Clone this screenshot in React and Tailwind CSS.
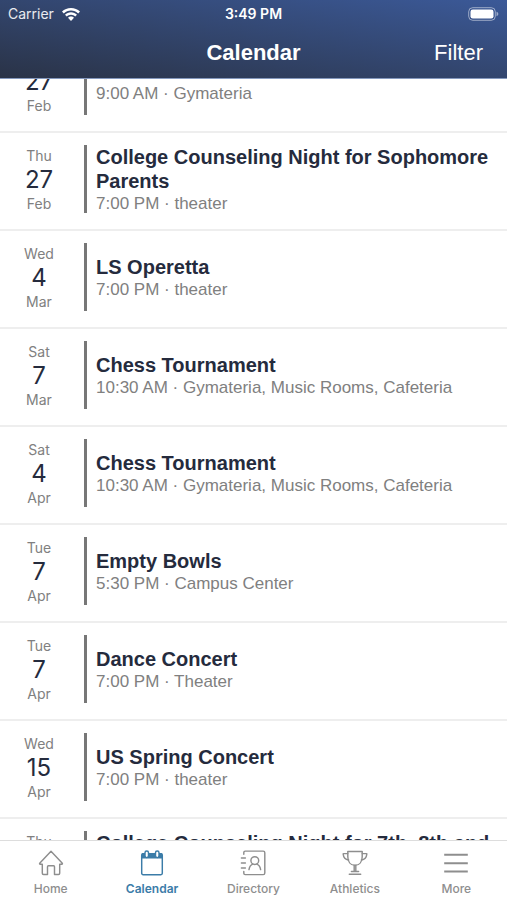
import { useLayoutEffect, useRef } from 'react';

const EVENTS = [
  { id: 1, weekday: 'Wed', day: '27', month: 'Feb', title: 'Book Fair', detail: '9:00 AM · Gymateria' },
  { id: 2, weekday: 'Thu', day: '27', month: 'Feb', title: 'College Counseling Night for Sophomore Parents', detail: '7:00 PM · theater' },
  { id: 3, weekday: 'Wed', day: '4', month: 'Mar', title: 'LS Operetta', detail: '7:00 PM · theater' },
  { id: 4, weekday: 'Sat', day: '7', month: 'Mar', title: 'Chess Tournament', detail: '10:30 AM · Gymateria, Music Rooms, Cafeteria' },
  { id: 5, weekday: 'Sat', day: '4', month: 'Apr', title: 'Chess Tournament', detail: '10:30 AM · Gymateria, Music Rooms, Cafeteria' },
  { id: 6, weekday: 'Tue', day: '7', month: 'Apr', title: 'Empty Bowls', detail: '5:30 PM · Campus Center' },
  { id: 7, weekday: 'Tue', day: '7', month: 'Apr', title: 'Dance Concert', detail: '7:00 PM · Theater' },
  { id: 8, weekday: 'Wed', day: '15', month: 'Apr', title: 'US Spring Concert', detail: '7:00 PM · theater' },
  { id: 9, weekday: 'Thu', day: '16', month: 'Apr', title: 'College Counseling Night for 7th, 8th and 9th Grade', detail: '7:00 PM · theater' },
];

function TabIcon({ children }) {
  return (
    <svg viewBox="0 0 26 26" className="size-[26px]" fill="none" stroke="currentColor" strokeWidth="1.45" strokeLinejoin="round" strokeLinecap="round" aria-hidden="true">
      {children}
    </svg>
  );
}

function HomeIcon() {
  return (
    <TabIcon>
      <path d="M13 1.300 1.700 13.300q-.5.9.6 1h2v9q0 1.200 1.200 1.200h4v-7.800q0-.9.9-.9h5.200q.9 0 .9.9v7.800h4q1.200 0 1.200-1.200v-9h2q1.100-.1.6-1Z" />
    </TabIcon>
  );
}

function CalendarIcon() {
  return (
    <TabIcon>
      <path d="M2.700 4.200q0-1.200 1.200-1.200h18.200q1.200 0 1.200 1.200v4.200H2.700Z" fill="currentColor" stroke="none" />
      <rect x="2.700" y="3.800" width="20.600" height="20.900" rx="1.400" />
      <rect x="6" y="1" width="3.500" height="6.600" rx="1.750" fill="#fff" />
      <rect x="16.500" y="1" width="3.500" height="6.600" rx="1.750" fill="#fff" />
    </TabIcon>
  );
}

function DirectoryIcon() {
  return (
    <TabIcon>
      <path d="M3.800 4.200V2.500q0-1.400 1.400-1.400h18q1.600 0 1.600 1.600v20.300q0 1.600-1.600 1.600h-18q-1.400 0-1.400-1.400v-1.700" />
      <path d="M1.400 7.900h4M1.400 12.900h4M1.400 17.900h4" />
      <circle cx="14.800" cy="10.600" r="3.900" />
      <path d="M9 19.600c.4-3.100 1.900-4.800 3.700-5.500M20.600 19.600c-.4-3.100-1.900-4.800-3.700-5.500" />
    </TabIcon>
  );
}

function TrophyIcon() {
  return (
    <TabIcon>
      <path d="M5.800 1.400h14.400v5.300c0 5-2.700 8.600-7.200 8.600s-7.200-3.600-7.200-8.600Z" />
      <path d="M5.800 3.600H1.600q-.5 0-.4.6c.3 3.200 2.200 5.300 5.400 5.800M20.200 3.600h4.200q.5 0 .4.600c-.3 3.200-2.200 5.300-5.400 5.800" />
      <path d="M12.200 15.400v5.900M13.800 15.400v5.900M9.400 21.500h7.200M7.300 24.300h11.400" />
    </TabIcon>
  );
}

function MoreIcon() {
  return (
    <TabIcon>
      <path d="M1.200 4.800h23.600M1.200 13.200h23.600M1.200 21.500h23.600" strokeWidth="2" strokeLinecap="butt" />
    </TabIcon>
  );
}

const TABS = [
  { label: 'Home', Icon: HomeIcon },
  { label: 'Calendar', Icon: CalendarIcon, active: true },
  { label: 'Directory', Icon: DirectoryIcon },
  { label: 'Athletics', Icon: TrophyIcon },
  { label: 'More', Icon: MoreIcon },
];

function StatusBar() {
  return (
    <div className="grid h-7 grid-cols-3 items-center px-2 font-[Inter,sans-serif] text-sm">
      <div className="flex items-center gap-2 text-white/90">
        <span>Carrier</span>
        <svg viewBox="0 0 18 13" className="h-[13px] w-[18px]" fill="#fff" aria-hidden="true">
          <path d="M9 0C5.500 0 2.300 1.300 0 3.600L1.800 5.500C3.700 3.600 6.200 2.600 9 2.600s5.300 1 7.200 2.900L18 3.600C15.700 1.300 12.500 0 9 0Z" />
          <path d="M9 4.200c-2.400 0-4.500.9-6 2.500l1.800 1.900C5.900 7.500 7.400 6.800 9 6.800s3.100.7 4.200 1.800L15 6.700C13.500 5.100 11.400 4.200 9 4.200Z" />
          <path d="M9 8.400c-1.200 0-2.200.5-3 1.300L9 13l3-3.300C11.200 8.900 10.200 8.400 9 8.400Z" />
        </svg>
      </div>
      <div className="text-center font-semibold">3:49 PM</div>
      <svg viewBox="0 0 31 14" className="h-[14px] w-[31px] justify-self-end" aria-hidden="true">
        <rect x=".7" y=".7" width="26.600" height="12.600" rx="4" fill="none" stroke="#fff" strokeOpacity=".5" />
        <rect x="2.500" y="2.500" width="23" height="9" rx="2.300" fill="#fff" />
        <path d="M28.500 4.800c1.300.4 1.800 1.200 1.800 2.200s-.5 1.800-1.800 2.200Z" fill="#fff" fillOpacity=".5" />
      </svg>
    </div>
  );
}

function EventRow({ event }) {
  return (
    <li className="flex border-b-2 border-[#eeeeee] pt-3 pb-4">
      <div className="-my-1 flex w-[84px] shrink-0 flex-col items-center justify-center pt-0.5 pr-1.5 font-[Inter,sans-serif] text-sm leading-5 text-[#808080]">
        <span>{event.weekday}</span>
        <span className="text-2xl leading-7 text-[#252b3d]">{event.day}</span>
        <span>{event.month}</span>
      </div>
      <div className="flex min-h-[68px] min-w-0 flex-1 flex-col justify-center border-l-3 border-[#777777] pl-[9px]">
        <div className="-my-1 pt-0.5 pr-3">
          <h2 className="text-xl leading-6 font-bold text-[#252b3d]">{event.title}</h2>
          <p className="text-[17px] leading-[22px] text-[#808080]">{event.detail}</p>
        </div>
      </div>
    </li>
  );
}

export default function App() {
  const listRef = useRef(null);

  // open the list part-way through the first event
  useLayoutEffect(() => {
    listRef.current.scrollTop = 44;
  }, []);

  return (
    <div className="flex h-screen flex-col bg-white font-['Liberation_Sans',sans-serif]">
      <header className="shrink-0 border-b border-[#8498bd] bg-linear-to-tr from-[#2a3347] to-[#3b5998] pb-0.5 text-white">
        <StatusBar />
        <div className="grid h-12 grid-cols-3 items-center">
          <h1 className="col-start-2 text-center text-[22px] font-bold">Calendar</h1>
          <button type="button" className="justify-self-end pr-6 text-[22px]">Filter</button>
        </div>
      </header>

      <main ref={listRef} className="min-h-0 flex-1 overflow-y-auto [scrollbar-width:none]">
        <ul>
          {EVENTS.map((e) => (
            <EventRow key={e.id} event={e} />
          ))}
        </ul>
      </main>

      <nav className="grid h-[60px] shrink-0 grid-cols-5 border-t border-[#dddddd] bg-white font-[Inter,sans-serif] text-xs font-medium">
        {TABS.map(({ label, Icon, active }) => (
          <a
            key={label}
            href={`#${label.toLowerCase()}`}
            aria-current={active ? 'page' : undefined}
            className={active ? 'flex flex-col items-center gap-[5px] pt-[9px] font-semibold text-[#3b7ca8]' : 'flex flex-col items-center gap-[5px] pt-[9px] text-[#8e8e8e]'}
          >
            <Icon />
            <span>{label}</span>
          </a>
        ))}
      </nav>
    </div>
  );
}
